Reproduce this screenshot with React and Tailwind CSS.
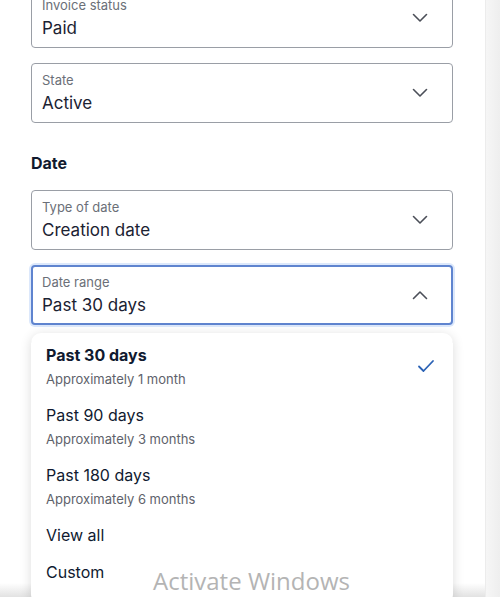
import React from 'react';

const font = { fontFamily: 'Inter, "Liberation Sans", sans-serif' };

const Chevron = ({ up }) => (
  <svg width="16" height="10" viewBox="0 0 16 10" fill="none" className="shrink-0">
    <path
      d={up ? 'M1.5 8.5 L8 2 L14.5 8.5' : 'M1.5 1.5 L8 8 L14.5 1.5'}
      stroke="#4b4f58"
      strokeWidth="1.6"
      strokeLinecap="round"
      strokeLinejoin="round"
    />
  </svg>
);

const SelectField = ({ label, value, focused, open, className = '' }) => (
  <div
    className={`h-[60px] w-[422px] rounded-[4px] bg-white flex items-center justify-between ${
      focused
        ? 'border-2 border-[#5f84cf] shadow-[0_0_0_2px_#dce8fb] pl-[9px] pr-[23px]'
        : 'border border-[#9a9ea6] pl-[10px] pr-[24px]'
    } ${className}`}
  >
    <div className="flex flex-col">
      {label && <span className="text-[13px] leading-[18px] text-[#6b6f78]">{label}</span>}
      {value && <span className="text-[17px] leading-[24px] text-[#1b2232] mt-[2px]">{value}</span>}
    </div>
    <Chevron up={open} />
  </div>
);

const options = [
  { title: 'Past 30 days', sub: 'Approximately 1 month', selected: true },
  { title: 'Past 90 days', sub: 'Approximately 3 months' },
  { title: 'Past 180 days', sub: 'Approximately 6 months' },
  { title: 'View all' },
  { title: 'Custom' },
];

export default function App() {
  return (
    <div className="w-[500px] h-[597px] overflow-hidden bg-white flex relative" style={font}>
      <div className="flex-1 relative">
        <div className="pl-[31px] mt-[-12px] flex flex-col">
          <SelectField label="Invoice status" value="Paid" />
          <SelectField label="State" value="Active" className="mt-[15px]" />
          <h3 className="text-[16px] font-bold text-[#111a2e] mt-[28px] leading-[24px]">Date</h3>
          <SelectField label="Type of date" value="Creation date" className="mt-[15px]" />
          <div className="relative mt-[15px]">
            <SelectField label="Date range" value="Past 30 days" focused open />
            <div className="absolute left-0 top-[68px] w-[422px] bg-white rounded-[10px] shadow-[0_2px_12px_rgba(0,0,0,0.14)] pt-[2px] pb-[20px] z-20">
              {options.map((o, i) => (
                <div
                  key={o.title}
                  className={`flex items-center justify-between pl-[15px] pr-[18px] ${
                    o.sub || i === 3 ? 'pt-[8px] pb-[6px]' : 'pt-[7px]'
                  }`}
                >
                  <div className="flex flex-col">
                    <span
                      className={`text-[16px] leading-[24px] text-[#101a30] ${
                        o.selected ? 'font-bold' : ''
                      }`}
                    >
                      {o.title}
                    </span>
                    {o.sub && (
                      <span className="text-[13px] leading-[20px] text-[#5e626b] mt-[2px]">{o.sub}</span>
                    )}
                  </div>
                  {o.selected && (
                    <svg width="18" height="14" viewBox="0 0 18 14" fill="none">
                      <path
                        d="M2 7.5 L6.5 12 L16 2"
                        stroke="#2b62b5"
                        strokeWidth="1.8"
                        strokeLinecap="round"
                        strokeLinejoin="round"
                      />
                    </svg>
                  )}
                </div>
              ))}
            </div>
          </div>
          <SelectField className="mt-[15px]" />
          <SelectField className="mt-[20px]" />
        </div>
        <div className="absolute left-0 right-0 bottom-0 h-[14px] bg-gradient-to-b from-transparent to-[#e2e2e2] z-10" />
        <div
          className="absolute left-[153px] top-[565px] text-[24px] leading-[32px] text-[#b4b4b4] z-30"
          style={{ fontFamily: '"Open Sans", "Noto Sans", sans-serif' }}
        >
          Activate Windows
        </div>
      </div>
      <div className="w-[15px] h-full bg-gradient-to-r from-[#f6f6f6] to-[#eeeeee] border-l border-[#ececec]" />
    </div>
  );
}
